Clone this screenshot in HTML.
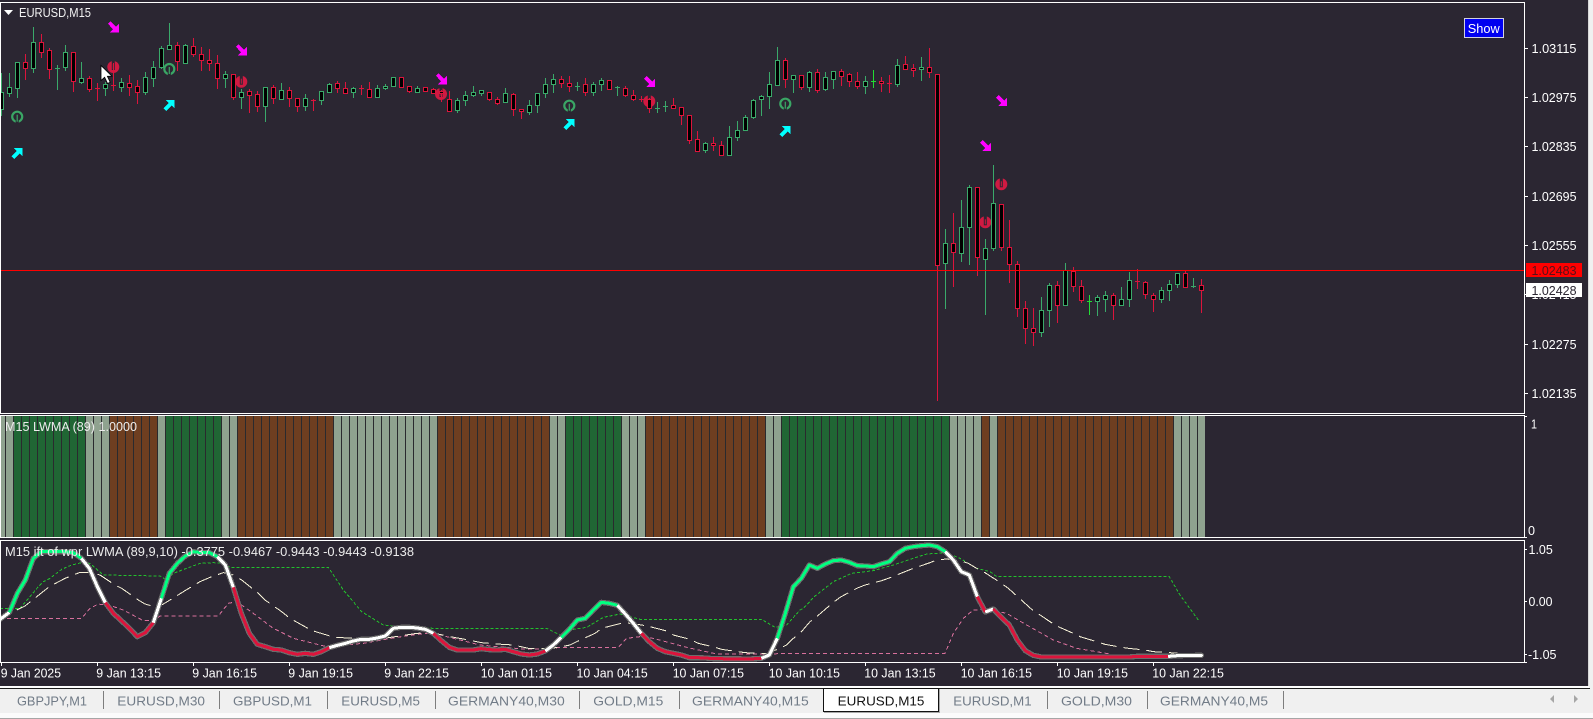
<!DOCTYPE html>
<html lang="en"><head><meta charset="utf-8"><title>EURUSD,M15</title>
<style>
html,body{margin:0;padding:0;background:#2b2632;width:1593px;height:719px;overflow:hidden}
svg{display:block}
text{font-family:"Liberation Sans",sans-serif;font-size:12.5px;fill:#f2f2f2}
.ax{fill:#fff}
.t{font-size:13px;fill:#717b87}
</style></head><body>
<svg width="1593" height="719" viewBox="0 0 1593 719" xmlns="http://www.w3.org/2000/svg">
<defs>
<pattern id="gp" patternUnits="userSpaceOnUse" x="0" y="0" width="8" height="10"><rect x="5" y="0" width="1" height="10" fill="#2a2a2e"/></pattern>
<g id="ir"><circle r="6" fill="#cf1a42"/><rect x="-1.5" y="-7" width="3" height="10" fill="#2b2632"/><rect x="-.5" y="-3" width="1" height="5" fill="#cf1a42"/></g>
<g id="ig"><circle r="5" fill="none" stroke="#3aa665" stroke-width="2.2"/><rect x="-1.5" y="2" width="3" height="5" fill="#2b2632"/><rect x="-.6" y="-2" width="1.2" height="7" fill="#3aa665"/></g>
<path id="am" d="M2.5 0L8 5.5 11 2.5V11H2L5 8 0 2.5z" fill="#ff00ff" shape-rendering="crispEdges"/>
<path id="ac" d="M2.5 11L8 5.5 11 8.5V0H2L5 3 0 8.5z" fill="#00ffff" shape-rendering="crispEdges"/>
</defs>
<rect width="1593" height="719" fill="#2b2632"/>
<rect x="1588" y="0" width="5" height="719" fill="#f0f0f0"/>
<rect x="1588" y="0" width="1" height="687" fill="#d8d8d8"/>

<!-- signal icons -->
<use href="#ig" x="17.2" y="116.7"/><use href="#ig" x="169.3" y="69"/><use href="#ig" x="569.3" y="105.7"/><use href="#ig" x="785.3" y="103.7"/>
<use href="#ir" x="113.3" y="67"/><use href="#ir" x="241.3" y="81.7"/><use href="#ir" x="441" y="94"/><use href="#ir" x="649.3" y="101.3"/><use href="#ir" x="1001.3" y="184.3"/><use href="#ir" x="985.3" y="222.3"/>

<!-- candles -->
<path fill="none" stroke="#3aa96a" d="M1.5 73V116M9.5 73V97M17.5 62V98M33.5 27V73M57.5 65V90M65.5 45V71M81.5 62V84M105.5 82V96M121.5 78V92M145.5 72V95M153.5 61V87M161.5 46V69M169.5 23V50M185.5 44V63M225.5 71V88M241.5 89V109M265.5 87V122M281.5 83V100M305.5 94V111M321.5 91V105M329.5 83V92M353.5 87V98M377.5 85V97M385.5 84V90M393.5 77V87M417.5 86V92M457.5 98V113M465.5 91V106M473.5 86V97M481.5 90V96M505.5 88V103M529.5 100V115M537.5 93V113M545.5 78V98M553.5 74V93M577.5 82V91M593.5 82V96M601.5 78V91M617.5 86V96M657.5 102V113M665.5 101V112M705.5 142V153M729.5 126V155M737.5 121V141M745.5 115V131M753.5 99V119M761.5 95V116M769.5 72V109M777.5 47V85M793.5 75V93M809.5 71V92M825.5 72V91M833.5 71V89M865.5 76V94M897.5 59V87M921.5 57V81M945.5 229V309M961.5 200V262M969.5 185V265M985.5 239V315M993.5 165V251M1041.5 297V337M1049.5 283V327M1065.5 263V305M1097.5 295V316M1105.5 291V312M1121.5 287V306M1129.5 272V307M1161.5 287V303M1169.5 280V301M1177.5 273V288M1193.5 278V288M55 68.5h5M575 86.5h5M615 87.5h5M655 108.5h5M663 106.5h5M1191 286.5h5"/>
<path fill="none" stroke="#dc143c" d="M25.5 54V80M41.5 34V58M49.5 48V79M73.5 52V92M89.5 76V92M97.5 83V101M113.5 63V91M129.5 75V96M137.5 80V104M177.5 42V71M193.5 38V57M201.5 47V71M209.5 49V71M217.5 55V89M233.5 74V100M249.5 89V113M257.5 91V112M273.5 85V104M289.5 87V107M297.5 98V112M313.5 99V111M337.5 81V93M345.5 82V94M361.5 85V95M369.5 82V98M401.5 77V87M409.5 86V93M425.5 87V92M433.5 88V93M441.5 90V102M449.5 91V111M489.5 92V101M497.5 97V105M513.5 93V116M521.5 109V119M561.5 76V88M569.5 76V92M585.5 78V96M609.5 80V89M625.5 86V97M633.5 90V101M641.5 96V102M649.5 98V113M673.5 98V109M681.5 107V125M689.5 115V144M697.5 131V152M713.5 137V151M721.5 141V155M785.5 58V88M801.5 75V90M817.5 69V93M841.5 69V86M849.5 73V87M857.5 72V89M881.5 77V92M889.5 75V93M905.5 56V70M913.5 64V77M929.5 48V78M937.5 74V401M953.5 213V287M977.5 187V276M1001.5 204V251M1009.5 220V283M1017.5 261V317M1025.5 301V344M1033.5 308V346M1057.5 281V323M1073.5 267V292M1081.5 280V303M1113.5 293V320M1137.5 269V289M1145.5 281V299M1153.5 293V312M1185.5 271V287M1201.5 279V313M95 88.5h5M111 85.5h5M311 100.5h5M359 88.5h5M639 99.5h5M887 83.5h5M1135 281.5h5"/>
<path fill="none" stroke="#22dd33" d="M873.5 70V88M871 81.5h5M1089.5 295V315M1087 301.5h5"/>
<path fill="#000" stroke="#3aa96a" d="M-.5 92.5h4v17h-4zM7.5 87.5h4v6h-4zM15.5 62.5h4v26h-4zM31.5 42.5h4v26h-4zM63.5 52.5h4v15h-4zM79.5 78.5h4v4h-4zM103.5 84.5h4v4h-4zM119.5 82.5h4v5h-4zM143.5 77.5h4v15h-4zM151.5 67.5h4v11h-4zM159.5 48.5h4v19h-4zM167.5 45.5h4v4h-4zM183.5 45.5h4v18h-4zM223.5 74.5h4v4h-4zM239.5 92.5h4v5h-4zM263.5 87.5h4v19h-4zM279.5 90.5h4v9h-4zM303.5 98.5h4v8h-4zM319.5 91.5h4v9h-4zM327.5 84.5h4v8h-4zM351.5 88.5h4v4h-4zM375.5 88.5h4v9h-4zM383.5 86.5h4v2h-4zM391.5 77.5h4v9h-4zM415.5 88.5h4v4h-4zM455.5 100.5h4v10h-4zM463.5 95.5h4v5h-4zM471.5 92.5h4v3h-4zM479.5 90.5h4v3h-4zM503.5 93.5h4v9h-4zM527.5 105.5h4v7h-4zM535.5 93.5h4v12h-4zM543.5 84.5h4v9h-4zM551.5 79.5h4v5h-4zM591.5 84.5h4v8h-4zM599.5 80.5h4v4h-4zM703.5 143.5h4v7h-4zM727.5 137.5h4v18h-4zM735.5 130.5h4v7h-4zM743.5 117.5h4v13h-4zM751.5 100.5h4v17h-4zM759.5 96.5h4v3h-4zM767.5 84.5h4v12h-4zM775.5 60.5h4v25h-4zM791.5 75.5h4v4h-4zM807.5 72.5h4v15h-4zM823.5 77.5h4v12h-4zM831.5 71.5h4v8h-4zM863.5 81.5h4v5h-4zM895.5 65.5h4v19h-4zM919.5 67.5h4v2h-4zM943.5 243.5h4v20h-4zM959.5 227.5h4v26h-4zM967.5 187.5h4v40h-4zM983.5 248.5h4v11h-4zM991.5 203.5h4v45h-4zM1039.5 310.5h4v22h-4zM1047.5 285.5h4v25h-4zM1063.5 270.5h4v35h-4zM1095.5 297.5h4v4h-4zM1103.5 295.5h4v4h-4zM1119.5 299.5h4v6h-4zM1127.5 280.5h4v19h-4zM1159.5 290.5h4v9h-4zM1167.5 284.5h4v6h-4zM1175.5 273.5h4v11h-4z"/>
<path fill="#000" stroke="#dc143c" d="M23.5 62.5h4v6h-4zM39.5 42.5h4v10h-4zM47.5 50.5h4v19h-4zM71.5 52.5h4v29h-4zM87.5 78.5h4v11h-4zM127.5 83.5h4v4h-4zM135.5 86.5h4v6h-4zM175.5 45.5h4v16h-4zM191.5 46.5h4v8h-4zM199.5 54.5h4v6h-4zM207.5 60.5h4v3h-4zM215.5 63.5h4v15h-4zM231.5 74.5h4v23h-4zM247.5 91.5h4v4h-4zM255.5 94.5h4v12h-4zM271.5 87.5h4v11h-4zM287.5 90.5h4v8h-4zM295.5 98.5h4v8h-4zM335.5 83.5h4v5h-4zM343.5 88.5h4v5h-4zM367.5 89.5h4v8h-4zM399.5 77.5h4v10h-4zM407.5 86.5h4v5h-4zM423.5 87.5h4v4h-4zM431.5 89.5h4v4h-4zM439.5 91.5h4v2h-4zM447.5 99.5h4v12h-4zM487.5 92.5h4v7h-4zM495.5 99.5h4v4h-4zM511.5 94.5h4v15h-4zM519.5 109.5h4v2h-4zM559.5 79.5h4v4h-4zM567.5 83.5h4v3h-4zM583.5 84.5h4v8h-4zM607.5 80.5h4v9h-4zM623.5 88.5h4v7h-4zM631.5 95.5h4v4h-4zM647.5 99.5h4v9h-4zM671.5 105.5h4v3h-4zM679.5 107.5h4v8h-4zM687.5 115.5h4v25h-4zM695.5 139.5h4v12h-4zM711.5 143.5h4v2h-4zM719.5 145.5h4v10h-4zM783.5 60.5h4v19h-4zM799.5 75.5h4v12h-4zM815.5 72.5h4v18h-4zM839.5 71.5h4v5h-4zM847.5 74.5h4v7h-4zM855.5 81.5h4v5h-4zM879.5 81.5h4v2h-4zM903.5 64.5h4v5h-4zM911.5 68.5h4v2h-4zM927.5 67.5h4v5h-4zM935.5 74.5h4v191h-4zM951.5 243.5h4v9h-4zM975.5 187.5h4v70h-4zM999.5 204.5h4v43h-4zM1007.5 247.5h4v17h-4zM1015.5 264.5h4v44h-4zM1023.5 308.5h4v20h-4zM1031.5 328.5h4v4h-4zM1055.5 285.5h4v20h-4zM1071.5 271.5h4v15h-4zM1079.5 286.5h4v14h-4zM1111.5 295.5h4v10h-4zM1143.5 282.5h4v12h-4zM1151.5 295.5h4v4h-4zM1183.5 273.5h4v14h-4zM1199.5 285.5h4v5h-4z"/>

<!-- arrows -->
<use href="#am" x="108" y="21.3"/><use href="#am" x="236" y="44.3"/><use href="#am" x="436" y="73.3"/><use href="#am" x="644" y="76"/><use href="#am" x="996" y="95"/><use href="#am" x="980" y="140"/>
<use href="#ac" x="11.5" y="148"/><use href="#ac" x="163.5" y="100"/><use href="#ac" x="563.5" y="119"/><use href="#ac" x="779.5" y="126"/>

<!-- cursor -->
<path d="M101 65.5V80.5L104.6 77.3 107.6 83.5 110.2 82.3 107.4 76.3 111.8 76.1Z" fill="#fff" stroke="#000" stroke-width=".8"/>

<!-- price line -->
<rect x="1" y="270" width="1524" height="1" fill="#ff0000"/>

<!-- histogram panel -->
<g>
<rect x="1" y="416" width="13" height="121" fill="#8fa28f"/>
<rect x="14" y="416" width="72" height="121" fill="#206634"/>
<rect x="86" y="416" width="24" height="121" fill="#8fa28f"/>
<rect x="110" y="416" width="48" height="121" fill="#6e3e20"/>
<rect x="158" y="416" width="8" height="121" fill="#8fa28f"/>
<rect x="166" y="416" width="56" height="121" fill="#206634"/>
<rect x="222" y="416" width="16" height="121" fill="#8fa28f"/>
<rect x="238" y="416" width="96" height="121" fill="#6e3e20"/>
<rect x="334" y="416" width="104" height="121" fill="#8fa28f"/>
<rect x="438" y="416" width="112" height="121" fill="#6e3e20"/>
<rect x="550" y="416" width="16" height="121" fill="#8fa28f"/>
<rect x="566" y="416" width="56" height="121" fill="#206634"/>
<rect x="622" y="416" width="24" height="121" fill="#8fa28f"/>
<rect x="646" y="416" width="120" height="121" fill="#6e3e20"/>
<rect x="766" y="416" width="16" height="121" fill="#8fa28f"/>
<rect x="782" y="416" width="168" height="121" fill="#206634"/>
<rect x="950" y="416" width="32" height="121" fill="#8fa28f"/>
<rect x="982" y="416" width="8" height="121" fill="#6e3e20"/>
<rect x="990" y="416" width="8" height="121" fill="#8fa28f"/>
<rect x="998" y="416" width="176" height="121" fill="#6e3e20"/>
<rect x="1174" y="416" width="31" height="121" fill="#8fa28f"/>
<rect x="1" y="416" width="1204" height="121" fill="url(#gp)"/>
</g>

<!-- oscillator panel -->
<g transform="translate(0 530) scale(.33333)" fill="none" stroke-linejoin="round" shape-rendering="crispEdges">
<polyline stroke="#d8709c" stroke-width="3" stroke-dasharray="12 9" points="0,265 245,265 270,235 295,222 335,228 370,240 430,272 465,270 480,258 655,258 685,220 710,215 760,250 820,295 880,325 980,350 1090,340 1190,322 1260,312 1300,308 1340,320 1440,345 1580,358 1645,355 1690,352 1855,352 1880,325 1920,320 1960,325 2060,352 2150,372 2290,372 2400,370 2835,370 2860,310 2890,265 2920,240 2960,238 3020,250 3080,285 3160,330 3230,355 3330,372"/>
<polyline stroke="#22c02c" stroke-width="3" stroke-dasharray="9 6" points="0,235 60,235 115,170 130,155 150,145 185,118 215,105 245,98 270,100 310,135 480,138 500,150 520,130 560,115 600,100 640,98 670,100 690,112 985,112 1030,180 1085,245 1150,285 1200,290 1300,295 1640,295 1680,315 1720,298 1760,292 1810,262 1860,252 1920,268 2285,268 2325,292 2360,285 2400,240 2410,235 2445,198 2500,155 2555,130 2620,122 2680,105 2740,85 2780,72 2840,68 2880,85 2930,115 2970,125 2990,140 3508,140 3540,195 3595,270"/>
<polyline stroke="#f7f2d8" stroke-width="3" stroke-dasharray="48 21" points="50,240 75,228 148,170 195,145 240,127 270,127 300,135 345,165 365,175 415,210 435,222 470,232 485,225 510,210 555,182 600,155 630,142 670,128 690,130 725,150 775,190 795,210 845,245 870,265 920,293 940,303 990,318 1010,322 1060,325 1085,328 1150,325 1200,318 1250,310 1295,308 1350,320 1395,328 1445,338 1490,342 1540,345 1585,355 1630,355 1670,353 1710,345 1730,335 1785,310 1805,295 1855,282 1875,278 1925,285 1950,290 2000,303 2020,315 2070,328 2095,340 2145,352 2165,358 2215,365 2235,368 2285,370 2305,370 2360,345 2380,325 2400,310 2430,275 2450,260 2500,217 2520,202 2570,175 2595,165 2645,152 2665,145 2715,125 2740,115 2790,98 2810,90 2840,87 2880,92 2905,100 2930,115 2955,128 3000,157 3025,175 3075,220 3095,238 3150,275 3170,288 3220,310 3240,320 3290,335 3315,343 3365,352 3385,355 3435,360 3460,365 3510,368 3600,375"/>
<polyline stroke="#6c6c6c" stroke-width="16" stroke-linecap="round" points="0,268 4,265 28,247 52,190 76,150 100,85 124,65 148,65 172,65 196,65 220,68 244,85 268,115 292,170 316,218 340,250 364,272 388,295 412,320 436,308 460,278 484,205 508,130 532,100 556,78 580,65 604,68 628,68 652,80 676,105 700,172 724,250 748,310 772,343 796,350 820,358 844,360 868,368 892,373 916,370 940,373 964,365 988,353 1012,346 1036,340 1060,333 1084,328 1108,328 1132,324 1156,318 1180,295 1204,292 1228,292 1252,294 1276,298 1300,310 1324,332 1348,352 1372,360 1396,360 1420,360 1444,356 1468,359 1492,360 1516,358 1540,365 1564,372 1588,375 1612,372 1636,363 1660,345 1684,322 1708,298 1732,270 1756,265 1780,240 1804,217 1828,220 1852,226 1876,252 1900,280 1924,310 1948,335 1972,355 1996,365 2020,370 2044,375 2068,383 2092,383 2116,384 2140,386 2250,387 2284,385 2308,375 2332,325 2356,250 2380,170 2404,145 2428,105 2452,115 2476,102 2500,92 2524,90 2548,97 2572,107 2596,108 2620,110 2644,102 2668,95 2692,70 2716,55 2740,50 2764,47 2788,45 2812,50 2836,65 2860,90 2884,125 2908,135 2932,200 2956,246 2980,237 3004,262 3028,285 3052,330 3076,362 3100,376 3124,381 3388,381 3412,379 3508,379 3532,377 3604,376"/>
<g stroke-width="9">
<polyline stroke="#fff" points="0,268 4,265 28,247"/>
<polyline stroke="#00ff80" points="28,247 52,190 76,150 100,85 124,65 148,65 172,65 196,65 220,68 244,85"/>
<polyline stroke="#fff" points="244,85 268,115 292,170 316,218"/>
<polyline stroke="#dc143c" points="316,218 340,250 364,272 388,295 412,320 436,308 460,278"/>
<polyline stroke="#fff" points="460,278 484,205"/>
<polyline stroke="#00ff80" points="484,205 508,130 532,100 556,78 580,65 604,68 628,68 652,80"/>
<polyline stroke="#fff" points="652,80 676,105 700,172"/>
<polyline stroke="#dc143c" points="700,172 724,250 748,310 772,343 796,350 820,358 844,360 868,368 892,373 916,370 940,373 964,365 988,353"/>
<polyline stroke="#fff" points="988,353 1012,346 1036,340 1060,333 1084,328 1108,328 1132,324 1156,318 1180,295 1204,292 1228,292 1252,294 1276,298 1300,310"/>
<polyline stroke="#dc143c" points="1300,310 1324,332 1348,352 1372,360 1396,360 1420,360 1444,356 1468,359 1492,360 1516,358 1540,365 1564,372 1588,375 1612,372 1636,363"/>
<polyline stroke="#fff" points="1636,363 1660,345 1684,322"/>
<polyline stroke="#00ff80" points="1684,322 1708,298 1732,270 1756,265 1780,240 1804,217 1828,220 1852,226"/>
<polyline stroke="#fff" points="1852,226 1876,252 1900,280 1924,310"/>
<polyline stroke="#dc143c" points="1924,310 1948,335 1972,355 1996,365 2020,370 2044,375 2068,383 2092,383 2116,384 2140,386 2250,387 2284,385"/>
<polyline stroke="#fff" points="2284,385 2308,375 2332,325"/>
<polyline stroke="#00ff80" points="2332,325 2356,250 2380,170 2404,145 2428,105 2452,115 2476,102 2500,92 2524,90 2548,97 2572,107 2596,108 2620,110 2644,102 2668,95 2692,70 2716,55 2740,50 2764,47 2788,45 2812,50 2836,65"/>
<polyline stroke="#fff" points="2836,65 2860,90 2884,125 2908,135 2932,200"/>
<polyline stroke="#dc143c" points="2932,200 2956,246"/>
<polyline stroke="#fff" points="2956,246 2980,237"/>
<polyline stroke="#dc143c" points="2980,237 3004,262 3028,285 3052,330 3076,362 3100,376 3124,381 3388,381 3412,379 3508,379"/>
<polyline stroke="#fff" points="3508,379 3532,377 3604,376" stroke-linecap="round"/>
</g>
</g>

<!-- frames -->
<g fill="none" stroke="#fff">
<rect x=".5" y="2.5" width="1524" height="411"/>
<rect x=".5" y="415.5" width="1524" height="122"/>
<rect x=".5" y="540.5" width="1524" height="122"/>
<path d="M1525 48.5h3M1525 97.5h3M1525 146.5h3M1525 196.5h3M1525 245.5h3M1525 294.5h3M1525 344.5h3M1525 393.5h3M1525 416.5h2M1525 537.5h2M1525 549.5h2M1525 601.5h2M1525 654.5h2M1525 662.5h2"/>
<path d="M1.5 663v3M97.5 663v3M193.5 663v3M289.5 663v3M385.5 663v3M481.5 663v3M577.5 663v3M673.5 663v3M769.5 663v3M865.5 663v3M961.5 663v3M1057.5 663v3M1153.5 663v3"/>
</g>

<!-- header -->
<path d="M4 10H13L8.5 15Z" fill="#fff"/>
<text x="19" y="17" textLength="72" lengthAdjust="spacingAndGlyphs">EURUSD,M15</text>

<!-- show button -->
<rect x="1464.5" y="18.5" width="39" height="19" fill="#0000f0" stroke="#d0d0e0"/>
<text x="1467.7" y="33" textLength="32" lengthAdjust="spacingAndGlyphs" style="font-size:13px;fill:#fff">Show</text>

<!-- price axis -->
<g class="axl">
<text class="ax" x="1531.5" y="53" textLength="45" lengthAdjust="spacingAndGlyphs">1.03115</text>
<text class="ax" x="1531.5" y="102" textLength="45" lengthAdjust="spacingAndGlyphs">1.02975</text>
<text class="ax" x="1531.5" y="151" textLength="45" lengthAdjust="spacingAndGlyphs">1.02835</text>
<text class="ax" x="1531.5" y="201" textLength="45" lengthAdjust="spacingAndGlyphs">1.02695</text>
<text class="ax" x="1531.5" y="250" textLength="45" lengthAdjust="spacingAndGlyphs">1.02555</text>
<text class="ax" x="1531.5" y="299" textLength="45" lengthAdjust="spacingAndGlyphs">1.02415</text>
<text class="ax" x="1531.5" y="349" textLength="45" lengthAdjust="spacingAndGlyphs">1.02275</text>
<text class="ax" x="1531.5" y="398" textLength="45" lengthAdjust="spacingAndGlyphs">1.02135</text>
</g>
<rect x="1526" y="263" width="56" height="14" fill="#ff0000"/>
<text x="1531.5" y="275" textLength="45" lengthAdjust="spacingAndGlyphs" style="fill:#5a1018">1.02483</text>
<rect x="1526" y="283" width="56" height="14" fill="#fff"/>
<text x="1531.5" y="295" textLength="45" lengthAdjust="spacingAndGlyphs" style="fill:#2b2632">1.02428</text>

<text class="ax" x="1531" y="428.5" textLength="6" lengthAdjust="spacingAndGlyphs">1</text>
<text class="ax" x="1528" y="535" textLength="7" lengthAdjust="spacingAndGlyphs">0</text>
<text class="ax" x="1528.5" y="553.8" textLength="24.3" lengthAdjust="spacingAndGlyphs">1.05</text>
<text class="ax" x="1528.5" y="606" textLength="24" lengthAdjust="spacingAndGlyphs">0.00</text>
<text class="ax" x="1528" y="659" textLength="28.5" lengthAdjust="spacingAndGlyphs">-1.05</text>

<!-- panel titles -->
<text x="5" y="431" textLength="132" lengthAdjust="spacingAndGlyphs" style="fill:#ececec">M15 LWMA (89) 1.0000</text>
<text x="5" y="556" textLength="409" lengthAdjust="spacingAndGlyphs" style="fill:#ececec">M15 ift of wpr LWMA (89,9,10) -0.3775 -0.9467 -0.9443 -0.9443 -0.9138</text>

<!-- time axis -->
<g>
<text class="ax" x=".7" y="677.5" textLength="60.3" lengthAdjust="spacingAndGlyphs">9 Jan 2025</text>
<text class="ax" x="96.3" y="677.5" textLength="64.7" lengthAdjust="spacingAndGlyphs">9 Jan 13:15</text>
<text class="ax" x="192.3" y="677.5" textLength="64.7" lengthAdjust="spacingAndGlyphs">9 Jan 16:15</text>
<text class="ax" x="288.3" y="677.5" textLength="64.7" lengthAdjust="spacingAndGlyphs">9 Jan 19:15</text>
<text class="ax" x="384.3" y="677.5" textLength="64.7" lengthAdjust="spacingAndGlyphs">9 Jan 22:15</text>
<text class="ax" x="480.7" y="677.5" textLength="71.3" lengthAdjust="spacingAndGlyphs">10 Jan 01:15</text>
<text class="ax" x="576.5" y="677.5" textLength="71.3" lengthAdjust="spacingAndGlyphs">10 Jan 04:15</text>
<text class="ax" x="672.7" y="677.5" textLength="71.3" lengthAdjust="spacingAndGlyphs">10 Jan 07:15</text>
<text class="ax" x="768.7" y="677.5" textLength="71.3" lengthAdjust="spacingAndGlyphs">10 Jan 10:15</text>
<text class="ax" x="864.3" y="677.5" textLength="71.3" lengthAdjust="spacingAndGlyphs">10 Jan 13:15</text>
<text class="ax" x="960.7" y="677.5" textLength="71.3" lengthAdjust="spacingAndGlyphs">10 Jan 16:15</text>
<text class="ax" x="1056.7" y="677.5" textLength="71.3" lengthAdjust="spacingAndGlyphs">10 Jan 19:15</text>
<text class="ax" x="1152.3" y="677.5" textLength="71.6" lengthAdjust="spacingAndGlyphs">10 Jan 22:15</text>
</g>

<!-- tab bar -->
<rect x="0" y="686" width="1589" height="2" fill="#fff"/>
<rect x="0" y="688" width="1590" height="1" fill="#1c1c1c"/>
<rect x="0" y="689" width="1590" height="24" fill="#f0f0f0"/>
<rect x="0" y="713" width="1593" height="5" fill="#fbfbfb"/>
<rect x="0" y="718" width="1593" height="1" fill="#a6a6a6"/>
<path stroke="#7d7d7d" fill="none" d="M103.5 691v18M219.5 691v18M327.5 691v18M435.5 691v18M579.5 691v18M679.5 691v18M1047.5 691v18M1147.5 691v18M1283.5 691v18"/>
<rect x="823.5" y="688.5" width="115" height="23" fill="#fff" stroke="#111"/>
<path d="M939.5 689v24M824 712.5h116" stroke="#a8a8a8" fill="none"/>
<text class="t" x="17" y="705.5" textLength="70" lengthAdjust="spacingAndGlyphs">GBPJPY,M1</text>
<text class="t" x="117.3" y="705.5" textLength="87.7" lengthAdjust="spacingAndGlyphs">EURUSD,M30</text>
<text class="t" x="233" y="705.5" textLength="79" lengthAdjust="spacingAndGlyphs">GBPUSD,M1</text>
<text class="t" x="341.3" y="705.5" textLength="78.7" lengthAdjust="spacingAndGlyphs">EURUSD,M5</text>
<text class="t" x="448" y="705.5" textLength="116.7" lengthAdjust="spacingAndGlyphs">GERMANY40,M30</text>
<text class="t" x="593.3" y="705.5" textLength="70" lengthAdjust="spacingAndGlyphs">GOLD,M15</text>
<text class="t" x="692" y="705.5" textLength="116.7" lengthAdjust="spacingAndGlyphs">GERMANY40,M15</text>
<text class="t" x="837.7" y="705.5" textLength="86.7" lengthAdjust="spacingAndGlyphs" style="fill:#111">EURUSD,M15</text>
<text class="t" x="953.3" y="705.5" textLength="78.3" lengthAdjust="spacingAndGlyphs">EURUSD,M1</text>
<text class="t" x="1061" y="705.5" textLength="71" lengthAdjust="spacingAndGlyphs">GOLD,M30</text>
<text class="t" x="1160" y="705.5" textLength="108" lengthAdjust="spacingAndGlyphs">GERMANY40,M5</text>
<path d="M1554 695v8l-4-4zM1574 695v8l4-4z" fill="#a6a6a6"/>
</svg>
</body></html>
